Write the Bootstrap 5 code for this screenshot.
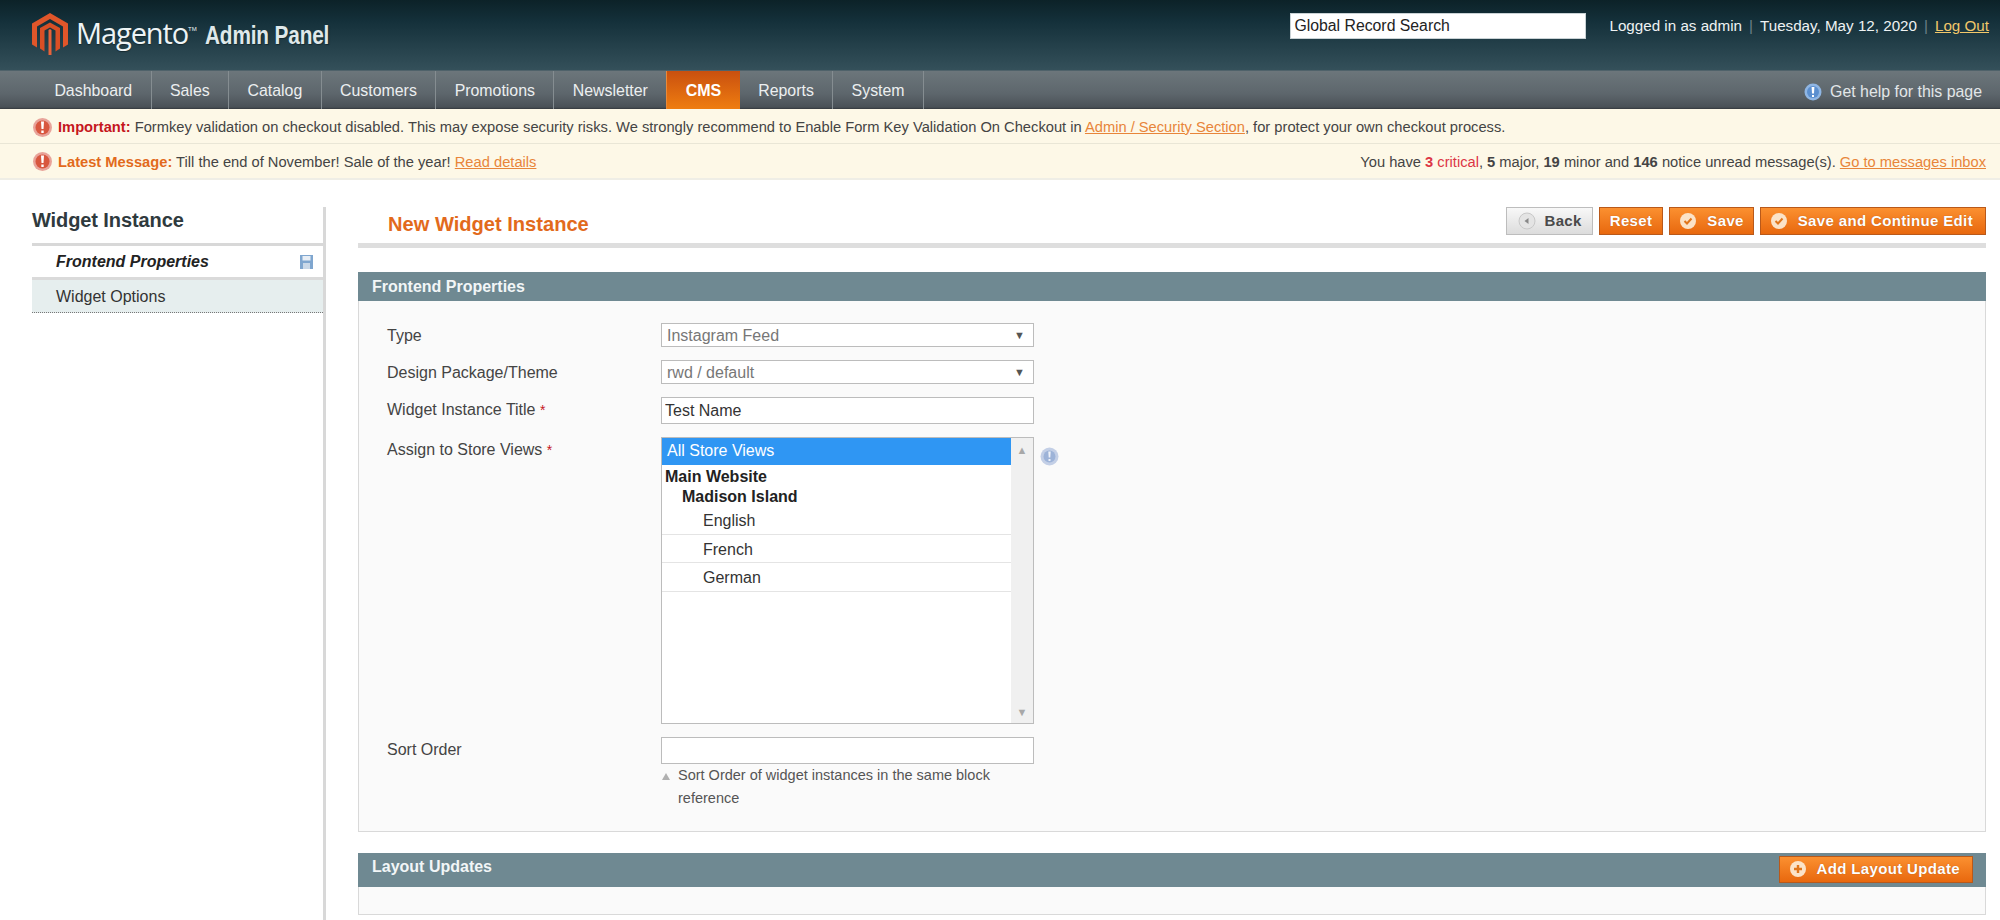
<!DOCTYPE html>
<html lang="en">
<head>
<meta charset="utf-8">
<title>New Widget Instance</title>
<link href="https://cdn.jsdelivr.net/npm/bootstrap@5.3.0/dist/css/bootstrap.min.css" rel="stylesheet">
<style>
html,body{height:920px;overflow:hidden}
body{font-family:"Liberation Sans",Arial,sans-serif;color:#444;background:#fff;font-size:15px}
a{color:#e8853a}
.mg-header{height:71px;background:linear-gradient(#0c2228 0%,#14303a 30%,#34505a 100%);padding:13px 11px 0 32px;border-bottom:1px solid #4f626a}
.mg-brand{color:#eef4f6;line-height:1}
.mg-word{font-family:"Open Sans","Liberation Sans",sans-serif;font-size:29px;letter-spacing:-1.1px;margin-left:8px;margin-top:5px;text-shadow:0 1px 1px #16292f}
.mg-tm{font-size:6px;margin-top:13px;margin-right:8px}
.mg-panel{font-family:"Liberation Sans",sans-serif;font-weight:700;font-size:26px;color:#dfe8ea;margin-top:9px;letter-spacing:-.2px;text-shadow:1px 1px 1px #16292f;transform:scaleX(.8);transform-origin:left center;white-space:nowrap}
.mg-search{width:296px;height:26px;border:1px solid #c9d2d5;border-radius:0;padding:0 3px;font:15.8px "Liberation Sans",sans-serif;color:#222;margin-right:23px;background:#fff}
.mg-user{color:#eef2f3;font-size:15.2px;line-height:26px}
.mg-user a{color:#f2c86a}
.mg-pipe{color:#6d8088;margin:0 7px}
.mg-nav{height:38px;background:linear-gradient(#6c767b 0%,#5d666c 60%,#4a5157 95%,#33383d 100%);padding-left:36px;padding-right:18px}
.mg-nav .nav-link{color:#eceff0;font-size:15.9px;line-height:39px;padding:0 18.4px;height:38px;border-right:1px solid #858d91}
.mg-nav .nav-link.mg-active{background:linear-gradient(#c9500f,#ef7d10);color:#fff;font-weight:700;border-right:0;border-left:1px solid #e98a3a;padding:0 18.5px;font-size:16px;margin-left:-1px}
.mg-help{color:#e2e6e8;font-size:15.9px;padding-top:9px}
.mg-notice{background:#fdf8e7;font-size:14.7px;color:#444;padding:2px 14px 0 33px}
.mg-n1{height:35px;border-bottom:1px solid #e9e6d6}
.mg-n2{height:36px;border-bottom:2px solid #efeee6}
.mg-ico{margin-right:6px;flex:none}
.mg-red{color:#c5161d;font-weight:700}
.mg-org{color:#e26a1c;font-weight:700}
.mg-body{height:740px}
.mg-side{width:294px;margin-left:32px;margin-top:27px;border-right:3px solid #d8d8d8;flex:none}
.mg-sidetitle{height:39px;font-size:20px;font-weight:700;color:#2f3a3e;line-height:26px;border-bottom:3px solid #d8d8d8;padding-bottom:10px;margin-right:-3px;letter-spacing:-.1px}
.mg-tab{height:32px;padding-left:24px;padding-right:10px;color:#333;font-size:16px}
.mg-tab1{font-weight:700;font-style:italic;height:34px;border-bottom:3px solid #dadada;color:#222;background:#fff;padding-top:1px}
.mg-tab2{background:#e6eeee;border-bottom:1px dotted #777;height:33px;padding-top:1px}
.mg-main{flex:1;margin-left:32px;margin-right:14px}
.mg-headrow{padding-top:27px;border-bottom:5px solid #dedede;box-sizing:content-box;height:33px;padding-bottom:3px}
.mg-h1{font-size:20.1px;font-weight:700;color:#e26a1c;margin:0 0 0 30px;line-height:28px;padding-top:3px}
.mg-actions{gap:6px}
.mg-btn{border-radius:0;font-size:15px;font-weight:700;height:28px;padding:0 12px;color:#fff;background:linear-gradient(#fb9030,#e8680e);border:1px solid #b9591a;letter-spacing:.35px;text-shadow:0 0 1px #a94f10;white-space:nowrap}
.mg-btn:hover{color:#fff}
.mg-iconbtn{padding-left:9px}
.mg-iconbtn svg{margin-right:2px}
.mg-btn-g{color:#4a4a4a;background:linear-gradient(#f8f8f8,#dcdcdc);border-color:#bdbdbd;text-shadow:none;padding-right:10px;padding-left:11px}
.mg-reset{padding:0 10px}
.mg-savebtn{padding-right:9px}
.mg-bar{background:#6f8992;color:#f2f6f7;font-weight:700;font-size:16px;padding-left:14px}
.mg-b1{height:29px;margin-top:24px}
.mg-b2{height:34px;margin-top:21px;padding-right:13px}
.mg-b2 > span{padding-bottom:6px}
.mg-b2 > .mg-btn{height:27px;margin-bottom:2px}
.mg-box{background:#fafafa;border:1px solid #d9d9d9;border-top:0}
.mg-b1box{height:531px;padding:22px 0 0 28px}
.mg-b2box{height:28px}
.mg-lab{width:274px;flex:none;color:#444;font-size:16px;padding-top:2px;line-height:22px}
.mg-lab sup{color:#c5161d;font-size:14px;vertical-align:baseline;top:0}
.mg-field{width:373px;flex:none}
.mg-sel{height:24px;background:#fff;border:1px solid #bcbcbc;color:#777;padding:1px 8px 0 5px;font-size:16px}
.mg-sel i{font-style:normal;font-size:11px;color:#555}
.mg-inp{display:block;width:100%;height:27px;border:1px solid #bcbcbc;border-radius:0;padding:0 3px;color:#333;font:16px "Liberation Sans",sans-serif;background:#fff}
.mg-list{height:287px;background:#fff;border:1px solid #bcbcbc;color:#333;font-size:16px}
.mg-opts{flex:1}
.mg-sb{width:22px;background:#f0f0f0;flex:none;color:#a8a8a8;font-size:11px;padding:4px 0 3px}
.mg-opt{height:29px;line-height:28px;padding-left:5px}
.mg-on{background:#2f96f3;color:#fff;height:27px;line-height:26px;margin-bottom:1px}
.mg-grp{font-weight:700;color:#222;height:20px;line-height:21px;padding-left:3px}
.mg-it{padding-left:41px;border-bottom:1px solid #e4e4e4;height:28.7px;line-height:29px}
.mg-qm{width:19px;height:19px;margin:10px 0 0 6px;flex:none}
.mg-hint{font-size:14.5px;line-height:23px;color:#555;padding-left:17px;margin-top:0}
.mg-tri{float:left;margin:9px 0 0 -16px;border-left:4px solid transparent;border-right:4px solid transparent;border-bottom:7px solid #b0b0b0;width:0;height:0}
.mg-row{margin-bottom:13px}
</style>
</head>
<body>
<header class="mg-header d-flex justify-content-between">
  <div class="mg-brand d-flex align-items-start">
    <svg width="36" height="42" viewBox="0 0 36 42" aria-hidden="true"><path d="M18 0 36 10.5V31.5L31 34.5V13.5L18 6 5 13.5V34.5L0 31.5V10.5Z" fill="#e0562a"/><path d="M18 9.5 28 15V35.5L23.5 38.5V17.5L18 14.5 12.5 17.5V38.5L8 35.5V15Z" fill="#d94f25"/><path d="M16.5 17V42L18 42 19.5 42V17L18 16Z" fill="#e8633a"/></svg>
    <span class="mg-word">Magento</span><span class="mg-tm">TM</span><span class="mg-panel">Admin Panel</span>
  </div>
  <div class="d-flex align-items-start">
    <input class="mg-search" type="text" value="Global Record Search" aria-label="Global Record Search">
    <div class="mg-user">Logged in as admin<span class="mg-pipe">|</span>Tuesday, May 12, 2020<span class="mg-pipe">|</span><a href="#">Log Out</a></div>
  </div>
</header>
<nav class="mg-nav d-flex justify-content-between align-items-start">
  <ul class="nav">
    <li class="nav-item"><a class="nav-link" href="#">Dashboard</a></li>
    <li class="nav-item"><a class="nav-link" href="#">Sales</a></li>
    <li class="nav-item"><a class="nav-link" href="#">Catalog</a></li>
    <li class="nav-item"><a class="nav-link" href="#">Customers</a></li>
    <li class="nav-item"><a class="nav-link" href="#">Promotions</a></li>
    <li class="nav-item"><a class="nav-link" href="#">Newsletter</a></li>
    <li class="nav-item"><a class="nav-link mg-active" href="#">CMS</a></li>
    <li class="nav-item"><a class="nav-link" href="#">Reports</a></li>
    <li class="nav-item"><a class="nav-link" href="#">System</a></li>
  </ul>
  <div class="mg-help d-flex align-items-center gap-2">
    <svg width="18" height="18" viewBox="0 0 18 18" aria-hidden="true"><circle cx="9" cy="9" r="8.5" fill="#8fb6e4"/><circle cx="9" cy="9" r="6" fill="#5b8fcf"/><path d="M7.6 4h2.8L10 10.5H8ZM8 12h2v2H8Z" fill="#fff"/></svg>
    <span>Get help for this page</span>
  </div>
</nav>
<div class="mg-notice mg-n1 d-flex align-items-center">
  <svg class="mg-ico" width="19" height="19" viewBox="0 0 19 19" aria-hidden="true"><circle cx="9.5" cy="9.5" r="9.5" fill="#e8a39a"/><circle cx="9.5" cy="9.5" r="7" fill="#d8573f"/><path d="M8 3.5h3l-.5 7.5h-2ZM8.3 12.5h2.4v2.5H8.3Z" fill="#fff"/></svg>
  <div><span class="mg-red">Important:</span> Formkey validation on checkout disabled. This may expose security risks. We strongly recommend to Enable Form Key Validation On Checkout in <a href="#">Admin / Security Section</a>, for protect your own checkout process.</div>
</div>
<div class="mg-notice mg-n2 d-flex align-items-center justify-content-between">
  <div class="d-flex align-items-center">
    <svg class="mg-ico" width="19" height="19" viewBox="0 0 19 19" aria-hidden="true"><circle cx="9.5" cy="9.5" r="9.5" fill="#e8a39a"/><circle cx="9.5" cy="9.5" r="7" fill="#d8573f"/><path d="M8 3.5h3l-.5 7.5h-2ZM8.3 12.5h2.4v2.5H8.3Z" fill="#fff"/></svg>
    <div><span class="mg-org">Latest Message:</span> Till the end of November! Sale of the year! <a href="#">Read details</a></div>
  </div>
  <div>You have <span class="text-danger"><b>3</b> critical</span>, <b>5</b> major, <b>19</b> minor and <b>146</b> notice unread message(s). <a href="#">Go to messages inbox</a></div>
</div>
<div class="mg-body d-flex">
  <aside class="mg-side">
    <div class="mg-sidetitle">Widget Instance</div>
    <div class="mg-tab mg-tab1 d-flex align-items-center justify-content-between">
      <span>Frontend Properties</span>
      <svg width="13" height="14" viewBox="0 0 13 14" aria-hidden="true"><rect width="13" height="14" fill="#7fa6cf"/><rect x="2.5" y="1" width="8" height="4.5" fill="#e8eef5"/><rect x="3" y="8" width="7" height="6" fill="#c9d8e8"/></svg>
    </div>
    <div class="mg-tab mg-tab2 d-flex align-items-center">Widget Options</div>
  </aside>
  <main class="mg-main">
    <div class="mg-headrow d-flex justify-content-between align-items-start">
      <h1 class="mg-h1">New Widget Instance</h1>
      <div class="d-flex mg-actions">
        <button class="btn mg-btn mg-btn-g d-flex align-items-center gap-2" type="button">
          <svg width="18" height="18" viewBox="0 0 18 18" aria-hidden="true"><circle cx="9" cy="9" r="8" fill="#e4e4e4" stroke="#c8c8c8"/><path d="M10.5 6v6L6.5 9Z" fill="#888"/></svg>Back</button>
        <button class="btn mg-btn mg-reset" type="button">Reset</button>
        <button class="btn mg-btn mg-iconbtn mg-savebtn d-flex align-items-center gap-2" type="button">
          <svg width="18" height="18" viewBox="0 0 18 18" aria-hidden="true"><circle cx="9" cy="9" r="8" fill="#fbe3c8"/><path d="M5.5 9l2.5 2.5L12.5 6.5" fill="none" stroke="#e0761c" stroke-width="2"/></svg>Save</button>
        <button class="btn mg-btn mg-iconbtn d-flex align-items-center gap-2" type="button">
          <svg width="18" height="18" viewBox="0 0 18 18" aria-hidden="true"><circle cx="9" cy="9" r="8" fill="#fbe3c8"/><path d="M5.5 9l2.5 2.5L12.5 6.5" fill="none" stroke="#e0761c" stroke-width="2"/></svg>Save and Continue Edit</button>
      </div>
    </div>
    <div class="mg-bar mg-b1 d-flex align-items-center">Frontend Properties</div>
    <div class="mg-box mg-b1box">
      <div class="d-flex mg-row">
        <div class="mg-lab">Type</div>
        <div class="mg-field mg-sel d-flex align-items-center justify-content-between"><span>Instagram Feed</span><i>▼</i></div>
      </div>
      <div class="d-flex mg-row">
        <div class="mg-lab">Design Package/Theme</div>
        <div class="mg-field mg-sel d-flex align-items-center justify-content-between"><span>rwd / default</span><i>▼</i></div>
      </div>
      <div class="d-flex mg-row">
        <div class="mg-lab">Widget Instance Title <sup>*</sup></div>
        <div class="mg-field"><input class="mg-inp" type="text" value="Test Name" aria-label="Widget Instance Title"></div>
      </div>
      <div class="d-flex mg-row">
        <div class="mg-lab">Assign to Store Views <sup>*</sup></div>
        <div class="mg-field mg-list d-flex">
          <div class="mg-opts">
            <div class="mg-opt mg-on">All Store Views</div>
            <div class="mg-grp">Main Website</div>
            <div class="mg-grp ps-3 ms-1">Madison Island</div>
            <div class="mg-opt mg-it">English</div>
            <div class="mg-opt mg-it">French</div>
            <div class="mg-opt mg-it">German</div>
          </div>
          <div class="mg-sb d-flex flex-column justify-content-between align-items-center"><span>▲</span><span>▼</span></div>
        </div>
        <svg class="mg-qm" viewBox="0 0 19 19" aria-hidden="true"><circle cx="9.5" cy="9.5" r="9" fill="#c3cfe6"/><circle cx="9.5" cy="9.5" r="6" fill="#9db3d8"/><path d="M8.3 4.5h2.4l-.4 6H8.7ZM8.5 12h2v2h-2Z" fill="#eef2f9"/></svg>
      </div>
      <div class="d-flex">
        <div class="mg-lab">Sort Order</div>
        <div class="mg-field">
          <input class="mg-inp" type="text" aria-label="Sort Order">
          <div class="mg-hint"><span class="mg-tri"></span>Sort Order of widget instances in the same block reference</div>
        </div>
      </div>
    </div>
    <div class="mg-bar mg-b2 d-flex align-items-center justify-content-between">
      <span>Layout Updates</span>
      <button class="btn mg-btn mg-iconbtn d-flex align-items-center gap-2" type="button">
        <svg width="18" height="18" viewBox="0 0 18 18" aria-hidden="true"><circle cx="9" cy="9" r="8" fill="#fbe3c8"/><path d="M5 9h8M9 5v8" stroke="#e0761c" stroke-width="2.4"/></svg>Add Layout Update</button>
    </div>
    <div class="mg-box mg-b2box"></div>
  </main>
</div>
<script src="https://cdn.jsdelivr.net/npm/bootstrap@5.3.0/dist/js/bootstrap.bundle.min.js"></script>
</body>
</html>
